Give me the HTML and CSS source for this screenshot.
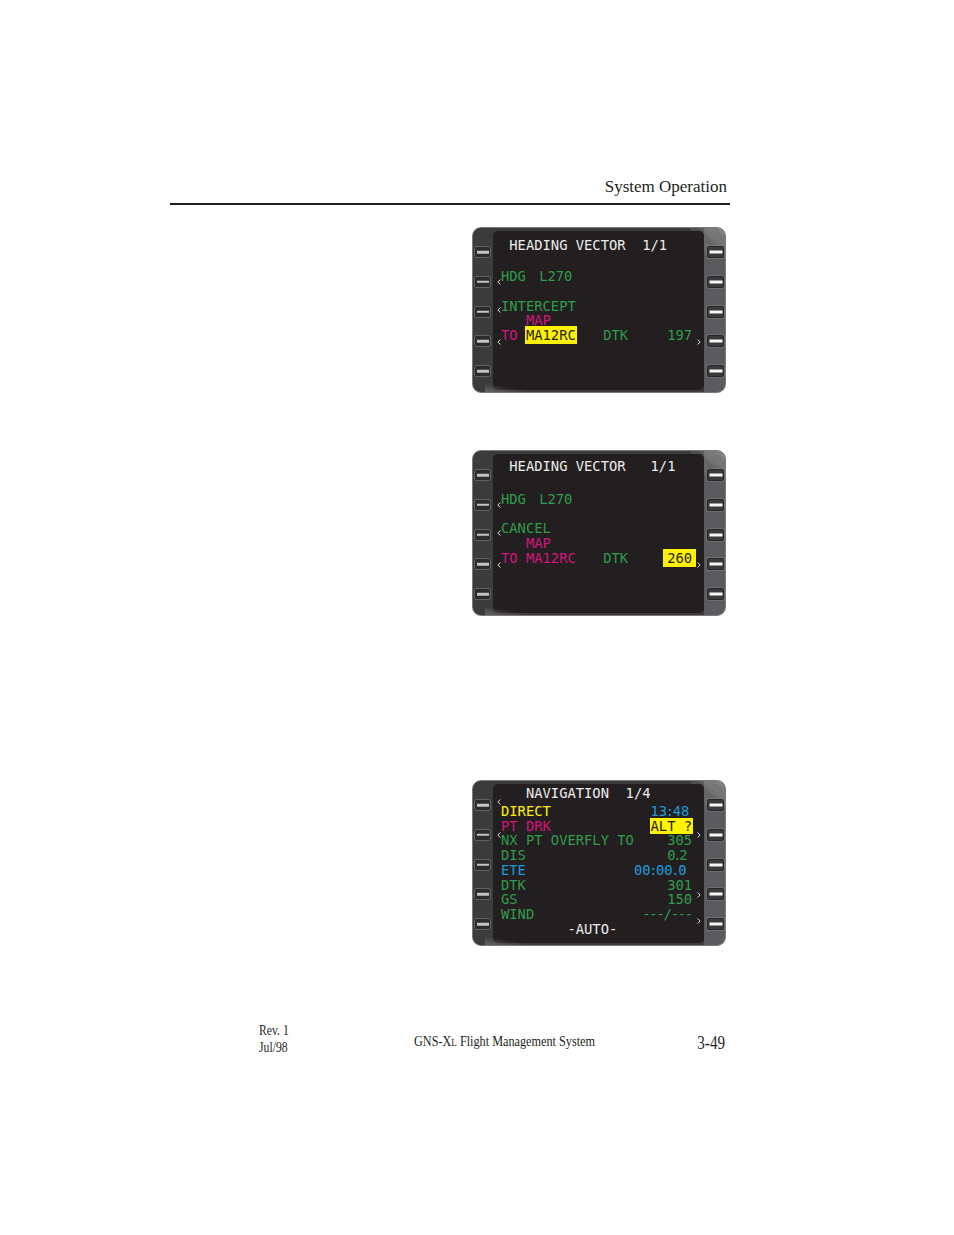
FILE: index.html
```html
<!DOCTYPE html>
<html>
<head>
<meta charset="utf-8">
<title>System Operation</title>
<link rel="stylesheet" href="styles.css">
</head>
<body>
<div class="page">
  <div class="header">System Operation</div>
  <div class="rule"></div>

  <div class="figures">
    <div class="cdu first">
      <div class="lsk-col left">
        <span class="lsk"></span><span class="lsk"></span><span class="lsk"></span><span class="lsk"></span><span class="lsk"></span>
      </div>
      <div class="screen s1">
        <div class="ln title w"> HEADING VECTOR  1/1</div>
        <div class="ln"> </div>
        <div class="ln g">HDG <span class="nudge">L270</span></div>
        <div class="ln"> </div>
        <div class="ln g">INTERCEPT</div>
        <div class="ln m">   MAP</div>
        <div class="ln"><span class="m">TO </span><span class="hl hl-a">MA12RC</span><span class="g">   <span class="nudge-s">DTK</span>     197</span></div>
        <span class="chev l r2"><svg width="4" height="6" viewBox="0 0 4 6"><polyline points="3.5,0.5 0.8,3 3.5,5.5"/></svg></span>
        <span class="chev l r3"><svg width="4" height="6" viewBox="0 0 4 6"><polyline points="3.5,0.5 0.8,3 3.5,5.5"/></svg></span>
        <span class="chev l r4"><svg width="4" height="6" viewBox="0 0 4 6"><polyline points="3.5,0.5 0.8,3 3.5,5.5"/></svg></span>
        <span class="chev rt r4"><svg width="4" height="6" viewBox="0 0 4 6"><polyline points="0.5,0.5 3.2,3 0.5,5.5"/></svg></span>
      </div>
      <div class="lsk-col right">
        <span class="lsk"></span><span class="lsk"></span><span class="lsk"></span><span class="lsk"></span><span class="lsk"></span>
      </div>
    </div>

    <div class="cdu second">
      <div class="lsk-col left">
        <span class="lsk"></span><span class="lsk"></span><span class="lsk"></span><span class="lsk"></span><span class="lsk"></span>
      </div>
      <div class="screen s2">
        <div class="ln title w"> HEADING VECTOR   1/1</div>
        <div class="ln"> </div>
        <div class="ln g">HDG <span class="nudge">L270</span></div>
        <div class="ln"> </div>
        <div class="ln g">CANCEL</div>
        <div class="ln m">   MAP</div>
        <div class="ln"><span class="m">TO MA12RC</span><span class="g">   <span class="nudge-s">DTK</span>     <span class="hl hl-b">260</span></span></div>
        <span class="chev l r2"><svg width="4" height="6" viewBox="0 0 4 6"><polyline points="3.5,0.5 0.8,3 3.5,5.5"/></svg></span>
        <span class="chev l r3"><svg width="4" height="6" viewBox="0 0 4 6"><polyline points="3.5,0.5 0.8,3 3.5,5.5"/></svg></span>
        <span class="chev l r4"><svg width="4" height="6" viewBox="0 0 4 6"><polyline points="3.5,0.5 0.8,3 3.5,5.5"/></svg></span>
        <span class="chev rt r4"><svg width="4" height="6" viewBox="0 0 4 6"><polyline points="0.5,0.5 3.2,3 0.5,5.5"/></svg></span>
      </div>
      <div class="lsk-col right">
        <span class="lsk"></span><span class="lsk"></span><span class="lsk"></span><span class="lsk"></span><span class="lsk"></span>
      </div>
    </div>

    <div class="cdu third">
      <div class="lsk-col left">
        <span class="lsk"></span><span class="lsk"></span><span class="lsk"></span><span class="lsk"></span><span class="lsk"></span>
      </div>
      <div class="screen s3">
        <div class="ln title w">   NAVIGATION  1/4</div>
        <div class="ln"><span class="y">DIRECT</span>            <span class="c">1<span class="tp">3:</span>48</span></div>
        <div class="ln"><span class="m">PT DRK</span>            <span class="hl hl-c">ALT ?</span></div>
        <div class="ln g">NX PT OVERFLY TO    305</div>
        <div class="ln g">DIS                 <span class="tpw">0.</span>2</div>
        <div class="ln c">ETE             0<span class="tp">0:</span>0<span class="tp">0.</span>0</div>
        <div class="ln g">DTK                 301</div>
        <div class="ln g">GS                  150</div>
        <div class="ln g">WIND             <span class="dashes">---/---</span></div>
        <div class="ln w">        -AUTO-</div>
        <span class="chev l r1"><svg width="4" height="6" viewBox="0 0 4 6"><polyline points="3.5,0.5 0.8,3 3.5,5.5"/></svg></span>
        <span class="chev l r2"><svg width="4" height="6" viewBox="0 0 4 6"><polyline points="3.5,0.5 0.8,3 3.5,5.5"/></svg></span>
        <span class="chev rt r2"><svg width="4" height="6" viewBox="0 0 4 6"><polyline points="0.5,0.5 3.2,3 0.5,5.5"/></svg></span>
        <span class="chev rt r4"><svg width="4" height="6" viewBox="0 0 4 6"><polyline points="0.5,0.5 3.2,3 0.5,5.5"/></svg></span>
        <span class="chev rt r5"><svg width="4" height="6" viewBox="0 0 4 6"><polyline points="0.5,0.5 3.2,3 0.5,5.5"/></svg></span>
      </div>
      <div class="lsk-col right">
        <span class="lsk"></span><span class="lsk"></span><span class="lsk"></span><span class="lsk"></span><span class="lsk"></span>
      </div>
    </div>
  </div>

  <div class="footer">
    <div class="rev"><span class="cond">Rev. 1<br>Jul/98</span></div>
    <div class="title-foot"><span class="cond">GNS-X<span class="sc">L</span> Flight Management System</span></div>
    <div class="pageno"><span class="cond">3-49</span></div>
  </div>
</div>
</body>
</html>
```

FILE: styles.css
```css
* { box-sizing: border-box; }

body {
  margin: 0;
  background: #ffffff;
  color: #231f20;
  font-family: "Liberation Serif", "Times New Roman", serif;
}

.page {
  width: 560px;
  margin-left: 170px;
  padding-top: 177px;
}

.header {
  height: 26px;
  font-size: 17px;
  line-height: 20px;
  text-align: right;
  padding-right: 3px;
}

.rule {
  height: 2px;
  background: #231f20;
}

.figures {
  margin-left: 302px;
  display: flex;
  flex-direction: column;
}

.cdu {
  position: relative;
  width: 254px;
  height: 166px;
  display: grid;
  grid-template-columns: 20px 211px 21px;
  padding: 3px 0 2px;
  border: 1px solid #7a797c;
  border-radius: 9px;
  overflow: hidden;
  background: linear-gradient(to right, #3b3a3c 0, #3b3a3c 231px, #5b5a5c 231px);
}

.cdu::before {
  content: "";
  position: absolute;
  top: 0;
  right: 0;
  width: 34px;
  height: 24px;
  background:
    repeating-linear-gradient(45deg, rgba(255,255,255,0.10) 0 1px, rgba(0,0,0,0) 1px 2px),
    linear-gradient(to bottom left, rgba(160,160,162,0.55) 0, rgba(160,160,162,0) 60%);
  pointer-events: none;
}

.cdu::after {
  content: "";
  position: absolute;
  left: 12px;
  bottom: 0;
  width: 40px;
  height: 8px;
  background: linear-gradient(to top right, rgba(150,150,152,0.45) 0, rgba(150,150,152,0) 60%);
  pointer-events: none;
}

.cdu.first { margin-top: 22px; }
.cdu.second { margin-top: 57px; }
.cdu.third { margin-top: 164px; }

.lsk-col {
  display: flex;
  flex-direction: column;
  gap: 17.75px;
  padding-top: 15px;
}

.lsk {
  position: relative;
  display: block;
  width: 17px;
  height: 12px;
  border-radius: 2px;
}

.lsk::after {
  content: "";
  position: absolute;
  left: 50%;
  top: 50%;
  transform: translate(-50%, -50%);
}

.lsk-col.left .lsk {
  margin-left: 1px;
  background: #2c2b2d;
  border: 1px solid #616063;
}

.lsk-col.left .lsk::after {
  width: 12px;
  height: 2.5px;
  background: #c4c4c6;
}

.lsk-col.right .lsk {
  margin-left: 3px;
  background: #3a393b;
  border: 1px solid #262527;
  box-shadow: 0 0 0 1px rgba(130,130,132,0.5);
}

.lsk-col.right .lsk::after {
  width: 13px;
  height: 3px;
  background: #f6f6f6;
}

.screen {
  position: relative;
  background: #231f20;
  border-radius: 5px;
  padding-left: 8px;
  font-family: "DejaVu Sans Mono", monospace;
  font-size: 13.8px;
  line-height: 14.75px;
  color: #2f9c4b;
}

.ln {
  height: 14.75px;
  white-space: pre;
}

.s1 { padding-top: 6.6px; }
.s1 .title { margin-bottom: 2px; }
.s2 { padding-top: 4.6px; }
.s2 .title { margin-bottom: 3.5px; }
.s3 { padding-top: 2.3px; }
.s3 .title { margin-bottom: 2.85px; }

.w { color: #ececec; }
.g { color: #2f9c4b; }
.m { color: #d4147f; }
.y { color: #fff200; }
.c { color: #1d9ad9; }

.nudge { margin-left: 0.6ch; }
.nudge-s { margin-left: 0.3ch; margin-right: -0.3ch; }

.tp { letter-spacing: -1.4px; }
.tpw { letter-spacing: -2.3px; }
.dashes { letter-spacing: -1.2px; }

.hl {
  background: #fff200;
  color: #231f20;
}
.hl-a { padding: 1px; margin-left: -1px; margin-right: -1px; }
.hl-b { padding: 1px 4px; margin-left: -4px; }
.hl-c { padding: 0 1px 0 1px; margin-left: -1px; }

.chev {
  position: absolute;
  display: block;
  width: 4px;
  height: 6px;
  line-height: 0;
}
.chev svg polyline {
  fill: none;
  stroke: #d8d8d8;
  stroke-width: 1;
}
.chev.l { left: 4px; }
.chev.rt { left: 204px; }
.chev.r1 { top: 15px; }
.chev.r2 { top: 48px; }
.chev.r3 { top: 76px; }
.chev.r4 { top: 108px; }
.chev.r5 { top: 134px; }

.footer {
  margin-top: 76px;
  margin-left: 89px;
  width: 466px;
  display: grid;
  grid-template-columns: 155px 1fr auto;
  align-items: start;
  font-size: 15px;
  line-height: 16.7px;
}

.cond {
  display: inline-block;
  white-space: nowrap;
}

.rev .cond {
  transform: scaleX(0.78);
  transform-origin: left top;
}

.title-foot { padding-top: 11.4px; }
.title-foot .cond {
  transform: scaleX(0.815);
  transform-origin: left top;
}
.sc { font-size: 11px; }

.pageno {
  font-size: 18px;
  line-height: 20px;
  padding-top: 11px;
}
.pageno .cond {
  transform: scaleX(0.84);
  transform-origin: right top;
}
```
